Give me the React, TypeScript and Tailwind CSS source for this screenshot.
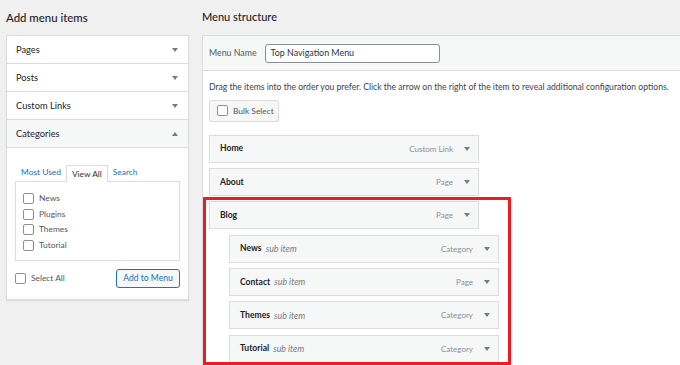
const Arrow = ({ up = false }: { up?: boolean }) => (
  <svg width="6" height="4" viewBox="0 0 6 4" className={up ? 'rotate-180' : ''}>
    <path d="M0 0h6L3 4z" fill="#787c82" />
  </svg>
);

const Box = ({ className = '' }: { className?: string }) => (
  <span className={`inline-block shrink-0 w-[11px] h-[11px] rounded-[2px] border border-[#8c8f94] bg-white ${className}`} />
);

const sidebarItems = ['Pages', 'Posts', 'Custom Links'];

const categories = ['News', 'Plugins', 'Themes', 'Tutorial'];

const topItems = [
  { name: 'Home', type: 'Custom Link' },
  { name: 'About', type: 'Page' },
  { name: 'Blog', type: 'Page' },
];

const subItems = [
  { name: 'News', type: 'Category' },
  { name: 'Contact', type: 'Page' },
  { name: 'Themes', type: 'Category' },
  { name: 'Tutorial', type: 'Category' },
];

const MenuItem = ({ name, type, sub }: { name: string; type: string; sub?: boolean }) => (
  <div className="h-[28px] w-[270px] flex items-center border border-[#dcdcde] bg-[#f6f7f7] pl-[10px] pr-[8px] whitespace-nowrap">
    <span className="font-bold text-[8.6px] text-[#1d2327]">{name}</span>
    {sub && <span className="italic text-[8.8px] text-[#787c82] ml-[4px]">sub item</span>}
    <span className="ml-auto text-[8px] text-[#8c8f94]">{type}</span>
    <span className="ml-[11px] flex"><Arrow /></span>
  </div>
);

const App = () => {
  return (
    <div className="relative w-[680px] h-[365px] bg-[#f0f0f1] flex overflow-hidden font-['Lato','Noto_Sans',sans-serif] text-[#2c3338]">
      {/* left column */}
      <div className="w-[183px] ml-[6px] shrink-0">
        <div className="h-[35px] flex items-center text-[11.4px] font-medium text-[#1d2327]">Add menu items</div>
        <div className="bg-white border border-[#dcdcde] shadow-[0_1px_1px_rgba(0,0,0,0.08)]">
          {sidebarItems.map((item) => (
            <div key={item} className="h-[28px] flex items-center justify-between pl-[9px] pr-[10px] border-b border-[#dcdcde] text-[9.3px] text-[#1d2327]">
              {item}
              <Arrow />
            </div>
          ))}
          <div className="h-[28px] flex items-center justify-between pl-[9px] pr-[10px] border-b border-[#dcdcde] bg-[#f6f7f7] text-[9.3px] text-[#1d2327]">
            Categories
            <Arrow up />
          </div>
          <div className="px-[8px] pt-[16px] pb-[11px]">
            <div className="flex text-[8.4px] text-[#2271b1] pl-[1px]">
              <span className="h-[17px] flex items-center px-[5px]">Most Used</span>
              <span className="h-[17px] flex items-center px-[5px] border border-b-0 border-[#dcdcde] bg-white text-[#2c3338] relative top-px">View All</span>
              <span className="h-[17px] flex items-center px-[5px]">Search</span>
            </div>
            <div className="h-[80px] border border-[#dcdcde] pt-[11px] pl-[7px] flex flex-col gap-[4.5px]">
              {categories.map((c) => (
                <label key={c} className="flex items-center gap-[5px] text-[8.4px] text-[#50575e] h-[11px]">
                  <Box />
                  {c}
                </label>
              ))}
            </div>
            <div className="flex items-center justify-between mt-[8px]">
              <label className="flex items-center gap-[5px] text-[8.4px] text-[#50575e]">
                <Box />
                Select All
              </label>
              <button className="h-[19px] w-[64px] rounded-[3px] border border-[#2271b1] bg-[#f6f7f7] text-[8.6px] text-[#2271b1] whitespace-nowrap">Add to Menu</button>
            </div>
          </div>
        </div>
      </div>

      {/* right column */}
      <div className="flex-1 ml-[13px]">
        <div className="h-[35px] flex items-center text-[11px] font-medium text-[#1d2327]">Menu structure</div>
        <div className="bg-white border-t border-l border-[#dcdcde] h-[330px]">
          <div className="h-[35px] bg-[#f6f7f7] border-b border-[#dcdcde] flex items-center pl-[6px] gap-[8px]">
            <span className="text-[8.8px] text-[#50575e]">Menu Name</span>
            <div className="h-[19px] w-[175px] rounded-[3px] border border-[#8c8f94] bg-white flex items-center px-[5px] text-[8.9px] text-[#2c3338]">
              Top Navigation Menu
            </div>
          </div>
          <div className="pl-[6px]">
            <p className="text-[8.6px] text-[#3c434a] mt-[10px] whitespace-nowrap">
              Drag the items into the order you prefer. Click the arrow on the right of the item to reveal additional configuration options.
            </p>
            <div className="mt-[6px] h-[22px] w-[70px] border border-[#dcdcde] bg-[#f6f7f7] rounded-[2px] flex items-center pl-[7px] gap-[5px] text-[8.4px] text-[#50575e] whitespace-nowrap">
              <Box />
              Bulk Select
            </div>
            <div className="mt-[13px] flex flex-col gap-[5.3px]">
              {topItems.map((it) => (
                <MenuItem key={it.name} {...it} />
              ))}
              <div className="pl-[20px] flex flex-col gap-[5.3px]">
                {subItems.map((it) => (
                  <MenuItem key={it.name} {...it} sub />
                ))}
              </div>
            </div>
          </div>
        </div>
      </div>

      {/* highlight annotation */}
      <div className="absolute left-[203px] top-[197px] w-[308px] h-[168px] border-[3px] border-[#ed1c24]" />
    </div>
  );
};

export default App;
